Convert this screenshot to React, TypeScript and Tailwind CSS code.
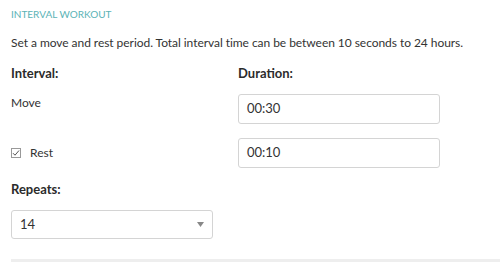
import React from "react";

export default function App() {
  return (
    <div className="w-[500px] h-[262px] bg-white overflow-hidden text-[#333]" style={{ fontFamily: "Lato, 'Open Sans', sans-serif" }}>
      <div className="pl-[11px] pr-[11px] pt-[7px]">
        <div className="text-[10px] leading-[14px] text-[#5bb3b6] uppercase">Interval Workout</div>
        <p className="mt-[14px] text-[12px] leading-[16px] tracking-[-0.05px]">
          Set a move and rest period. Total interval time can be between 10 seconds to 24 hours.
        </p>
        <div className="mt-[14px] grid grid-cols-[227px_202px]">
          <div className="text-[13px] leading-[16px] font-bold text-[#2b2b2b]">Interval:</div>
          <div className="text-[13px] leading-[16px] font-bold text-[#2b2b2b]">Duration:</div>

          <div className="mt-[13px] pt-[1px] text-[12px] leading-[16px]">Move</div>
          <div className="mt-[13px] h-[30px] border border-[#d4d4d4] rounded-[3px] flex items-center px-[8px] text-[13px]">00:30</div>

          <div className="mt-[14px] flex items-center gap-[9px]">
            <span className="w-[10px] h-[10px] border border-[#999] flex items-center justify-center">
              <svg width="8" height="8" viewBox="0 0 8 8">
                <path d="M1 4.2 L3 6.2 L7 1.5" fill="none" stroke="#555" strokeWidth="1" />
              </svg>
            </span>
            <span className="text-[12px] leading-[16px]">Rest</span>
          </div>
          <div className="mt-[14px] h-[30px] border border-[#d4d4d4] rounded-[3px] flex items-center px-[8px] text-[13px]">00:10</div>
        </div>
        <div className="mt-[13px] text-[13px] leading-[16px] font-bold text-[#2b2b2b]">Repeats:</div>
        <div className="mt-[13px] w-[202px] h-[29px] border border-[#d4d4d4] rounded-[3px] flex items-center justify-between pl-[8px] pr-[8px] text-[13px]">
          <span>14</span>
          <svg width="7" height="5" viewBox="0 0 7 5">
            <path d="M0 0 L7 0 L3.5 5 Z" fill="#888" />
          </svg>
        </div>
        <div className="mt-[20px] -mr-[11px] h-[3px] bg-[#eeeeee]"></div>
      </div>
    </div>
  );
}
